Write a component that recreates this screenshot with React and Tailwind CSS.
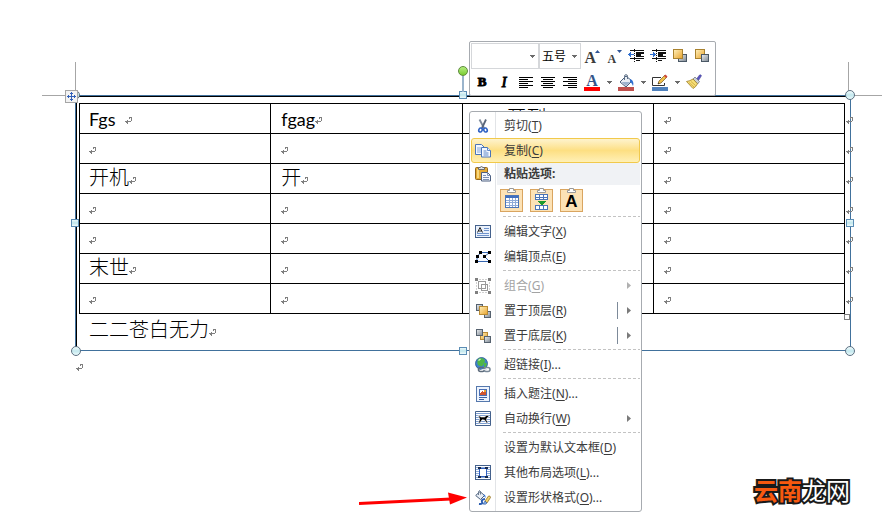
import clsx from 'clsx'

const ROWS = [
  ['Fgs ', 'fgag', '开到', ''],
  ['', '', '', ''],
  ['开机', '开', '', ''],
  ['', '', '', ''],
  ['', '', '', ''],
  ['末世', '', '', ''],
  ['', '', '', ''],
]

export default function App() {
  return (
    <main className="relative min-h-screen overflow-hidden bg-white pt-[95px] font-['Lato','Noto_Sans_CJK_SC',sans-serif] text-black">
      <TextBox />
      <div className="ml-[76px] mt-[13px]">
        <ReturnMark />
      </div>
      <div
        className="absolute bottom-[9px] right-[37px] font-['Noto_Sans_CJK_SC',sans-serif] text-[24px] leading-[40px] text-white [-webkit-text-stroke:4px_#1a1a1a] [paint-order:stroke_fill]"
      >
        <span className="font-bold text-[#f8590f]">云南</span>
        <span>龙网</span>
      </div>
    </main>
  )
}

function TextBox() {
  return (
    <section className="relative ml-[75px] mr-[36px] border border-[#41719c] pl-[3px] pr-[5px] pt-[7px] shadow-[inset_1px_1px_0_#000]">
      {/* Page margin marks */}
      <span className="absolute bottom-full left-[-1px] h-[34px] w-px bg-[#a6a6a6]" />
      <span className="absolute right-full top-[-1px] h-px w-[34px] bg-[#a6a6a6]" />
      <span className="absolute bottom-full right-[1px] h-[34px] w-px bg-[#a6a6a6]" />
      <span className="absolute left-full top-[-1px] h-px w-[32px] bg-[#a6a6a6]" />

      <div className="relative">
        <table className="w-full table-fixed border-collapse">
          <tbody>
            {ROWS.map((cells, r) => (
              <tr key={r} className="h-[30px]">
                {cells.map((text, c) => (
                  <td key={c} className={clsx('relative border border-black p-0', c === 0 ? 'pl-[9px]' : 'pl-[10px]')}>
                    <div className={clsx('flex h-[29px] items-center', text === '开到' && 'pl-[34px]')}>
                      <CellText text={text} />
                      <span className="mt-[4px]"><ReturnMark /></span>
                    </div>
                    {c === 3 && (
                      <span className="absolute left-full top-[13px] ml-[2px]">
                        <ReturnMark />
                      </span>
                    )}
                  </td>
                ))}
              </tr>
            ))}
          </tbody>
        </table>
        <span className="absolute right-[-5px] top-full size-[6px] border border-[#7f7f7f] bg-white" />
      </div>

      <p className="flex h-[36px] items-center pb-[4px] pl-[10px]">
        <CellText text="二二苍白无力" />
        <span className="mt-[4px]"><ReturnMark /></span>
      </p>

      {/* Selection handles */}
      <CircleHandle className="left-[-6px] top-[-6px]" />
      <CircleHandle className="right-[-5px] top-[-6px]" />
      <CircleHandle className="bottom-[-6px] left-[-5px]" />
      <CircleHandle className="bottom-[-6px] right-[-5px]" />
      <SquareHandle className="left-1/2 top-[-5px] -ml-[4px]" />
      <SquareHandle className="bottom-[-5px] left-1/2 -ml-[4px]" />
      <SquareHandle className="left-[-5px] top-1/2 -mt-[4px]" />
      <SquareHandle className="right-[-4px] top-1/2 -mt-[4px]" />
      <span className="absolute left-1/2 top-[-20px] -ml-px h-[16px] w-[2px] bg-[#9ab4cc]" />
      <span className="absolute left-1/2 top-[-30px] -ml-[5px] size-[10px] rounded-full border border-[#5c8a3c] bg-linear-to-b from-[#b4ee7c] to-[#79cc2e]" />
      <MoveHandle />

      <MiniToolbar />
      <ContextMenu />
    </section>
  )
}

function CellText({ text }) {
  if (!text) return null
  const latin = /^[a-z ]+$/i.test(text)
  return (
    <span className={clsx('whitespace-pre leading-[26px]', latin ? 'text-[18px]' : 'pb-[3px] text-[20px] font-light')}>
      {text}
      {text.endsWith(' ') && ' '}
    </span>
  )
}

function CircleHandle({ className }) {
  return (
    <span className={clsx('absolute size-[10px] rounded-full border border-[#5d7183] bg-linear-to-b from-[#f2fcfd] via-[#c3e8ee] to-[#eafafb]', className)} />
  )
}

function SquareHandle({ className }) {
  return (
    <span className={clsx('absolute size-[8px] border border-[#5b8db5] bg-linear-to-b from-[#e8f8fa] via-[#bfe6ec] to-[#effbfc]', className)} />
  )
}

function MoveHandle() {
  return (
    <span className="absolute left-[-11px] top-[-6px] flex size-[13px] items-center justify-center border border-[#a6a6a6] bg-[#f2f2f2]">
      <svg width="9" height="9" viewBox="0 0 9 9" fill="none" stroke="#2f5fb8">
        <path d="M4.5 0v9M0 4.5h9M3 2l1.5-1.5L6 2M3 7l1.5 1.5L6 7M2 3L.5 4.5 2 6M7 3l1.5 1.5L7 6" />
      </svg>
    </span>
  )
}

function ReturnMark() {
  return (
    <svg className="block" width="7" height="7" viewBox="0 0 7 7" fill="none" stroke="#7f7f7f" shapeRendering="crispEdges">
      <path d="M4 .5h3M6.5 0v4M4.5 1v1M0 4.5h6M1.5 3.5v2M2.5 2.5v4" />
    </svg>
  )
}

/* ---------- Mini toolbar ---------- */

function MiniToolbar() {
  return (
    <div
      role="toolbar"
      aria-label="格式"
      className="absolute bottom-full left-1/2 ml-[6px] rounded-[2px] border border-[#a7abb0] bg-white p-px pb-0 pr-[2px]"
    >
      <div className="flex h-[26px]">
        <FormatSelect label="字体" options={['']} className="w-[68px]" />
        <FormatSelect label="字号" options={['五号']} className="w-[42px] pl-[2px]" />
        <ToolButton label="增大字体"><FontSizeIcon grow /></ToolButton>
        <ToolButton label="缩小字体"><FontSizeIcon /></ToolButton>
        <ToolButton label="减少缩进"><IndentIcon out /></ToolButton>
        <ToolButton label="增加缩进"><IndentIcon /></ToolButton>
        <ToolButton label="上移一层"><LayerIcon front /></ToolButton>
        <ToolButton label="下移一层"><LayerIcon /></ToolButton>
      </div>
      <div className="flex h-[26px]">
        <ToolButton label="加粗">
          <span className="font-['Liberation_Serif',serif] text-[13px] font-black [-webkit-text-stroke:1px_#000]">B</span>
        </ToolButton>
        <ToolButton label="倾斜">
          <span className="font-['Liberation_Serif',serif] text-[14px] italic [-webkit-text-stroke:1px_#000]">I</span>
        </ToolButton>
        <ToolButton label="左对齐"><AlignIcon d="M1 1.5h14M1 3.5h9M1 5.5h14M1 7.5h9M1 9.5h14M1 11.5h9" /></ToolButton>
        <ToolButton label="居中"><AlignIcon d="M1 1.5h14M3 3.5h10M1 5.5h14M3 7.5h10M1 9.5h14M3 11.5h10" /></ToolButton>
        <ToolButton label="右对齐"><AlignIcon d="M1 1.5h14M6 3.5h9M1 5.5h14M6 7.5h9M1 9.5h14M6 11.5h9" /></ToolButton>
        <ToolButton label="字体颜色"><FontColorIcon /></ToolButton>
        <DropButton label="更多字体颜色" />
        <ToolButton label="形状填充"><FillIcon /></ToolButton>
        <DropButton label="更多填充" />
        <ToolButton label="形状轮廓"><OutlineIcon /></ToolButton>
        <DropButton label="更多轮廓" />
        <ToolButton label="格式刷"><BrushIcon /></ToolButton>
      </div>
    </div>
  )
}

function FormatSelect({ label, options, className }) {
  return (
    <div className="relative">
      <select
        aria-label={label}
        className={clsx("h-[26px] appearance-none border border-[#d5d7da] bg-white font-['Noto_Sans_CJK_SC',sans-serif] text-[12px]", className)}
      >
        {options.map(o => <option key={o}>{o}</option>)}
      </select>
      <span className="pointer-events-none absolute right-[4px] top-[12px]"><DownArrow /></span>
    </div>
  )
}

function ToolButton({ label, children }) {
  return (
    <button aria-label={label} className="flex w-[22px] items-center justify-center">
      {children}
    </button>
  )
}

function DropButton({ label }) {
  return (
    <button aria-label={label} className="flex w-[12px] items-center justify-center">
      <DownArrow />
    </button>
  )
}

function DownArrow() {
  return (
    <svg width="5" height="3" viewBox="0 0 5 3" fill="#6b6b6b" shapeRendering="crispEdges">
      <path d="M0 0h5L2.5 3z" />
    </svg>
  )
}

function FontSizeIcon({ grow }) {
  return (
    <span className="relative flex h-[18px] w-[15px] items-end">
      <span className={clsx("font-['Liberation_Serif',serif] font-bold text-[#3c3c3c]", grow ? 'text-[16px] leading-[14px]' : 'pl-px text-[12px] leading-[12px]')}>
        A
      </span>
      <svg className="absolute right-0 top-[3px]" width="5" height="3" viewBox="0 0 5 3" fill="#2f5597">
        <path d={grow ? 'M0 3h5L2.5 0z' : 'M0 0h5L2.5 3z'} />
      </svg>
    </span>
  )
}

function IndentIcon({ out }) {
  return (
    <svg width="16" height="16" viewBox="0 0 16 16" fill="none" stroke="#111" shapeRendering="crispEdges">
      <path d="M2 2.5h14M8 4.5h8M8 6.500h5M8 8.500h8M2 10.500h14M8 12.500h4" />
      <path d="M8 5.5h8M8 7.5h5" />
      <path d="M6.500 1v14" strokeDasharray="1 1" />
      <path d={out ? 'M0 6.500l3-3V6h3v1H3v2.500z' : 'M6 6.500l-3-3V6H0v1h3v2.500z'} fill="#2f6fd0" stroke="none" />
    </svg>
  )
}

function LayerIcon({ front }) {
  return (
    <svg width="16" height="16" viewBox="0 0 16 16">
      <Gradients />
      {front ? (
        <>
          <rect x="6.5" y="6.5" width="8" height="7" fill="url(#gray)" stroke="#4a5866" />
          <rect x="1.5" y="1.5" width="9" height="9" fill="url(#gold)" stroke="#a9822f" />
        </>
      ) : (
        <>
          <rect x="1.5" y="1.5" width="9" height="9" fill="url(#gold)" stroke="#a9822f" />
          <rect x="7.5" y="6.5" width="7" height="7" fill="url(#gray)" stroke="#4a5866" />
        </>
      )}
    </svg>
  )
}

function Gradients() {
  return (
    <defs>
      <linearGradient id="gold" x1="0" y1="0" x2="1" y2="1">
        <stop offset="0" stopColor="#fff1bd" />
        <stop offset="1" stopColor="#e8a32c" />
      </linearGradient>
      <linearGradient id="gray" x1="0" y1="0" x2="1" y2="1">
        <stop offset="0" stopColor="#eceff2" />
        <stop offset="1" stopColor="#7d8791" />
      </linearGradient>
    </defs>
  )
}

function AlignIcon({ d }) {
  return (
    <svg width="16" height="13" viewBox="0 0 16 13" fill="none" stroke="#000" shapeRendering="crispEdges">
      <path d={d} />
    </svg>
  )
}

function FontColorIcon() {
  return (
    <span className="flex w-[16px] flex-col items-center">
      <span className="font-['Liberation_Serif',serif] text-[16px] font-bold leading-[13px] text-[#34558b]">A</span>
      <span className="h-[4px] w-full bg-[#ff0000]" />
    </span>
  )
}

function FillIcon() {
  return (
    <svg width="16" height="17" viewBox="0 0 16 17">
      <path d="M2 8l6-6 6 5-6 6z" fill="#e9eef5" stroke="#4a5f7c" />
      <path d="M3.5 8h9L8 12z" fill="#9db3cf" />
      <path d="M6.5 6V2.2q0-1.5 1.5-1.5t1.5 1.5V5" fill="none" stroke="#5d6f85" />
      <path d="M12 5c3 1 4 4 3 7-1-2-1-3-3-4z" fill="#2f6fd0" />
      <path d="M0 13h16v4H0z" fill="#c0504d" />
    </svg>
  )
}

function OutlineIcon() {
  return (
    <svg width="16" height="17" viewBox="0 0 16 17">
      <path d="M9 3.5H.5v8H12.5V9" fill="#fff" stroke="#333" />
      <path d="M6 10l1-3 6-6 2 2-6 6z" fill="#f0c048" stroke="#7a5a20" strokeWidth=".7" />
      <path d="M12 2l1.5-1.5L15.5 2.5 14 4z" fill="#d0453c" />
      <path d="M6 10l.5-1.5 1 1z" fill="#222" />
      <path d="M0 13h16v4H0z" fill="#4f81bd" />
    </svg>
  )
}

function BrushIcon() {
  return (
    <svg width="16" height="16" viewBox="0 0 16 16">
      <path d="M10.5 5l3-4q1.5-.8 2 .8l-3 4.7z" fill="#5a55c0" stroke="#3d3a8c" strokeWidth=".5" />
      <path d="M7 5l2-2 4.500 4.500-2 2.500z" fill="#c9ced6" stroke="#666f7c" strokeWidth=".7" />
      <path d="M7 5q-3 2-6.500 2.500L7 14.500q3-1.500 4.500-4.700z" fill="#f6df77" stroke="#9c7b22" strokeWidth=".8" />
      <path d="M3 8.5L8 13M5 7.5l4.500 4" stroke="#c49b30" strokeWidth=".7" />
    </svg>
  )
}

/* ---------- Context menu ---------- */

function ContextMenu() {
  return (
    <div
      role="menu"
      className="absolute left-1/2 top-[15px] ml-[6px] w-[173px] rounded-[3px] border border-[#a7abb0] bg-white bg-[linear-gradient(#e2e4e7,#e2e4e7)] bg-size-[1px_100%] bg-position-[25px_0] bg-no-repeat p-px font-['Noto_Sans','Noto_Sans_CJK_SC',sans-serif] text-[12px] text-[#3b3b3b]"
    >
      <MenuItem icon={<CutIcon />} label="剪切" hotkey="T" />
      <MenuItem icon={<CopyIcon />} label="复制" hotkey="C" active />

      <div className="flex h-[22px]">
        <span className="flex w-[24px] items-center justify-center"><PasteIcon /></span>
        <span className="ml-[2px] flex flex-1 items-center bg-[#f0f2f5] pl-[7px] font-bold">粘贴选项:</span>
      </div>
      <div className="flex h-[30px] items-center gap-[7px] pl-[29px]">
        <PasteButton label="使用目标样式"><TableIcon /></PasteButton>
        <PasteButton label="合并表格"><MergeIcon /></PasteButton>
        <PasteButton label="只保留文本">
          <span className="font-['Liberation_Sans',sans-serif] text-[17px] font-bold leading-none text-black">A</span>
        </PasteButton>
      </div>

      <Separator />
      <MenuItem icon={<EditTextIcon />} label="编辑文字" hotkey="X" />
      <MenuItem icon={<EditPointsIcon />} label="编辑顶点" hotkey="E" />
      <Separator />
      <MenuItem icon={<GroupIcon />} label="组合" hotkey="G" submenu disabled />
      <MenuItem icon={<StackIcon top />} label="置于顶层" hotkey="R" submenu split />
      <MenuItem icon={<StackIcon />} label="置于底层" hotkey="K" submenu split />
      <Separator />
      <MenuItem icon={<LinkIcon />} label="超链接" hotkey="I" more />
      <Separator />
      <MenuItem icon={<CaptionIcon />} label="插入题注" hotkey="N" more />
      <MenuItem icon={<WrapIcon />} label="自动换行" hotkey="W" submenu />
      <Separator />
      <MenuItem label="设置为默认文本框" hotkey="D" />
      <MenuItem icon={<LayoutIcon />} label="其他布局选项" hotkey="L" more />
      <MenuItem icon={<ShapeFormatIcon />} label="设置形状格式" hotkey="O" more />

      {/* Callout arrow to the last entry */}
      <svg className="absolute bottom-[6px] right-full mr-[3px]" width="108" height="14" viewBox="0 0 108 14">
        <path d="M0 12.5L92 8" stroke="#ff0000" strokeWidth="3" />
        <path d="M89 1.5l19 5-17 7z" fill="#ff0000" />
      </svg>
    </div>
  )
}

function MenuItem({ icon, label, hotkey, more, submenu, split, disabled, active }) {
  return (
    <button
      role="menuitem"
      disabled={disabled}
      className={clsx(
        'flex h-[25px] w-full items-center rounded-[3px] border text-left',
        active
          ? 'border-[#f1c94b] bg-linear-to-b from-[#fef3cd] via-[#fddf82] to-[#fff0b5]'
          : 'border-transparent',
        disabled && 'text-[#a3a3a3]'
      )}
    >
      <span className="flex w-[22px] justify-center">{icon}</span>
      <span className="flex-1 whitespace-nowrap pl-[10px]">
        {label}(<u className="underline-offset-2">{hotkey}</u>){more && '...'}
      </span>
      {split && <span className="mr-[9px] h-[17px] w-px bg-[#7d8a99]" />}
      {submenu && (
        <svg className="mr-[8px]" width="4" height="7" viewBox="0 0 4 7" fill={disabled ? '#b0b0b0' : '#7a7a7a'}>
          <path d="M0 0v7l4-3.5z" />
        </svg>
      )}
    </button>
  )
}

function Separator() {
  return (
    <div role="separator" className="ml-[32px] h-[4px] pt-px">
      <div className="h-px bg-[repeating-linear-gradient(90deg,#c3c3c3_0_3px,transparent_3px_5px)]" />
    </div>
  )
}

function PasteButton({ label, children }) {
  return (
    <button aria-label={label} className="relative flex size-[23px] items-center justify-center border border-[#d9a560] bg-[#fce2b6] pt-[3px]">
      <svg className="absolute left-[6px] top-[-2px]" width="9" height="5" viewBox="0 0 9 5" fill="#fff" stroke="#9a9a9a">
        <path d="M.5 4.5v-2h2v-2h4v2h2v2z" />
      </svg>
      {children}
    </button>
  )
}

function TableIcon() {
  return (
    <svg width="14" height="13" viewBox="0 0 14 13" shapeRendering="crispEdges">
      <path d="M0 0h14v13H0z" fill="#fff" />
      <path d="M.5.5h13v12H.5zM4.5 3v9M7.5 3v9M10.5 3v9M1 5.5h12M1 7.5h12M1 10.5h12" fill="none" stroke="#8fabd8" />
      <path d="M0 0h14v3H0z" fill="#3f6fc0" />
      <path d="M.5.5h13v12H.5z" fill="none" stroke="#4b75b8" />
    </svg>
  )
}

function MergeIcon() {
  return (
    <svg width="13" height="16" viewBox="0 0 13 16" shapeRendering="crispEdges">
      <path d="M.5.5h12v5H.5zM.5 3.5h12M4.5 1v4M8.5 1v4M.5 11.5h12v4H.5zM4.5 12v3M8.5 12v3" fill="#fff" stroke="#4b75b8" />
      <path d="M2 7h9l-4.5 4.5z" fill="#1d9a2c" />
    </svg>
  )
}

function CutIcon() {
  return (
    <svg width="16" height="16" viewBox="0 0 16 16" fill="none">
      <path d="M4.500 1.500L9 10" stroke="#7b8798" strokeWidth="1.800" />
      <path d="M11 1.500L7 10" stroke="#59657a" strokeWidth="1.800" />
      <ellipse cx="5.500" cy="12" rx="1.700" ry="2" stroke="#2f62c4" strokeWidth="1.600" transform="rotate(20 5.500 12)" />
      <ellipse cx="10.500" cy="12" rx="1.700" ry="2" stroke="#2f62c4" strokeWidth="1.600" transform="rotate(-20 10.500 12)" />
    </svg>
  )
}

function CopyIcon() {
  return (
    <svg width="16" height="16" viewBox="0 0 16 16" fill="#f4f8ff" stroke="#4a74b8">
      <path d="M.5 1.500h6l2.500 2.500v7.500H.5z" />
      <path d="M2 5h4M2 7h4M2 9h4" stroke="#86a6d8" />
      <path d="M6.500 4.500h6l3 3v6.500h-9z" />
      <path d="M12.500 4.500v3h3M8.500 8h3M8.500 10h5M8.500 12h5" stroke="#5d87c8" />
    </svg>
  )
}

function PasteIcon() {
  return (
    <svg width="16" height="16" viewBox="0 0 16 16">
      <rect x=".5" y="1.500" width="12" height="12" rx="1" fill="#e5ab34" stroke="#94661a" />
      <path d="M2 3h2v9H2z" fill="#f8d77c" />
      <path d="M3.500 3.500v-2h1.500q1.500-2 3 0h1.500v2z" fill="#dfe2e6" stroke="#6a6a6a" />
      <path d="M6.500 6.500h6l3 3v5.500h-9z" fill="#f4f7fc" stroke="#4d5f80" />
      <path d="M12.500 6.500v3h3M8 9.500h3M8 11.500h6M8 13.500h6" fill="none" stroke="#7f92b4" />
    </svg>
  )
}

function EditTextIcon() {
  return (
    <svg width="16" height="14" viewBox="0 0 16 14" shapeRendering="crispEdges">
      <path d="M.5.5h15v12H.5z" fill="#eaf1fb" stroke="#44618c" />
      <path d="M9 3.500h5M9 5.500h5M2 8.500h12M2 10.500h12" stroke="#6f93cc" />
      <path d="M2.500 7.500l2.500-5 2.500 5M3.500 6h3" fill="none" stroke="#222" shapeRendering="auto" />
    </svg>
  )
}

function EditPointsIcon() {
  return (
    <svg width="16" height="14" viewBox="0 0 16 14">
      <path d="M5.500 2.500h9l-5 4 5 5h-13l1-5z" fill="#f7faff" stroke="#3565b0" />
      <path d="M4 1h3v3H4zM13 1h3v3h-3zM8 5h3v3H8zM0 10h3v3H0zM13 10h3v3h-3zM1 5h3v3H1z" fill="#000" />
    </svg>
  )
}

function GroupIcon() {
  return (
    <svg width="16" height="16" viewBox="0 0 16 16" fill="none" stroke="#9a9a9a" shapeRendering="crispEdges">
      <path d="M4 1.500h8M4 14.500h8M1.500 4v8M14.500 4v8" stroke="#d0d0d0" strokeDasharray="2 1" />
      <path d="M3.500 3.500h7v7h-7zM6.500 6.500h6v6h-6z" />
      <path d="M0 0h3v3H0zM13 0h3v3h-3zM0 13h3v3H0zM13 13h3v3h-3z" fill="#7f7f7f" stroke="none" />
    </svg>
  )
}

function StackIcon({ top }) {
  const back = (
    <>
      <rect x="1.500" y="1.500" width="6" height="6" fill="url(#gray)" stroke="#56626f" />
      <rect x="9.500" y="8.500" width="6" height="6" fill="url(#gray)" stroke="#56626f" />
    </>
  )
  return (
    <svg width="16" height="16" viewBox="0 0 16 16">
      <Gradients />
      {top && back}
      {top
        ? <rect x="4.500" y="3.500" width="8" height="8" fill="url(#gold)" stroke="#b98b34" />
        : <rect x="5.500" y="4.500" width="7" height="7" fill="url(#gold)" stroke="#b98b34" />}
      {!top && back}
    </svg>
  )
}

function LinkIcon() {
  return (
    <svg width="16" height="16" viewBox="0 0 16 16">
      <circle cx="6.500" cy="6.500" r="6" fill="#3d82cf" stroke="#28578f" strokeWidth=".8" />
      <path d="M3 2q3-2 6 0 2 2 0 4-1 4-4 3-4-1-2-7zM9 6q2-1 3 1-1 3-3 4z" fill="#4fb648" />
      <path d="M3.500 3.500l2-1.500" stroke="#d5f3cf" strokeWidth="1.200" />
      <rect x="3.500" y="10.500" width="6" height="4" rx="2" fill="none" stroke="#5d6b7b" strokeWidth="1.600" />
      <rect x="9" y="10.500" width="6" height="4" rx="2" fill="none" stroke="#7a8999" strokeWidth="1.600" />
      <path d="M6.500 12.500h5.500" stroke="#dfe5ec" />
    </svg>
  )
}

function CaptionIcon() {
  return (
    <svg width="14" height="16" viewBox="0 0 14 16" shapeRendering="crispEdges">
      <path d="M.5.5h13v15H.5z" fill="#eef4fd" stroke="#5578ad" />
      <path d="M3.500 3.500h7v6h-7z" fill="#fff" stroke="#4a6fb5" />
      <path d="M4 7l2-2 1 1h3v3H4z" fill="#d2562f" />
      <path d="M8 4h2v2H8z" fill="#f0a830" />
      <path d="M3 11.500h8M3 13.500h5" stroke="#3f64a5" />
    </svg>
  )
}

function WrapIcon() {
  return (
    <svg width="16" height="15" viewBox="0 0 16 15">
      <path d="M.5.5h15v14H.5z" fill="#fff" stroke="#44618c" />
      <path d="M1 2.500h14M1 4.500h14M1 6.500h14M1 8.500h14M1 10.500h14M1 12.500h14" stroke="#7f9fd0" />
      <path d="M3 4l3 2h3.500L12 4l2 1.500-2 1.500-.5 2 1.500 3h-1.500L9.500 9 7 8.800l-2 3.200H3.500l1.200-4z" fill="#000" stroke="#fff" strokeWidth=".6" />
    </svg>
  )
}

function LayoutIcon() {
  return (
    <svg width="16" height="15" viewBox="0 0 16 15" shapeRendering="crispEdges">
      <path d="M.5.5h15v14H.5z" fill="#fff" stroke="#44618c" />
      <path d="M1 2.500h14M1 4.500h14M1 6.500h14M1 8.500h14M1 10.500h14M1 12.500h14" stroke="#8facd8" />
      <path d="M4.500 3.500h7v8h-7z" fill="#fff" stroke="#2f5fc0" />
      <path d="M3 2h3v2H3zM10 2h3v2h-3zM3 11h3v2H3zM10 11h3v2h-3z" fill="#16284a" />
    </svg>
  )
}

function ShapeFormatIcon() {
  return (
    <svg width="16" height="16" viewBox="0 0 16 16">
      <path d="M.7 5.500L5 1.500l4.500 4L5.500 9.500z" fill="#e9eef5" stroke="#4a5f7c" />
      <path d="M3.500 5V1.500Q4.500-.5 5.500 1.500v3" fill="none" stroke="#6b7b90" />
      <path d="M8.500 4q2.500 1 2 4L9 6z" fill="#2f6fd0" />
      <path d="M4 14q4 .5 3-2t3-3" fill="none" stroke="#2b5cb0" strokeWidth="2" />
      <path d="M10 11l3.500-5q2-.5 2 1.500L12 13z" fill="#f3d36a" stroke="#86651c" strokeWidth=".7" />
      <path d="M8 14l2-3 2 2q-1 2-4 1z" fill="#7fa9e2" stroke="#2c559c" strokeWidth=".6" />
    </svg>
  )
}
